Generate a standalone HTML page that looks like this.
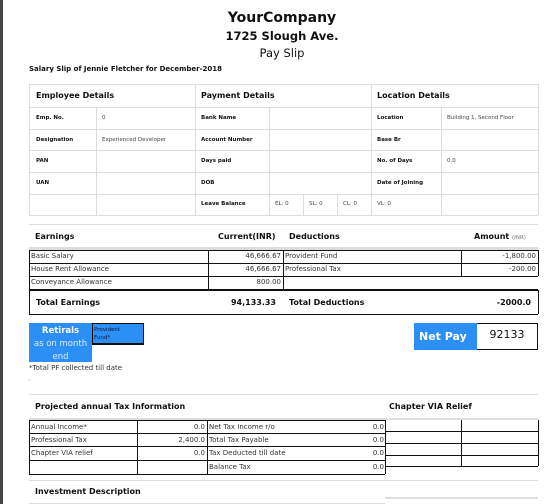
<!DOCTYPE html>
<html><head><meta charset="utf-8"><style>
*{margin:0;padding:0;box-sizing:border-box}
body{width:559px;height:504px;background:#fff;position:relative;overflow:hidden;font-family:"DejaVu Sans","Liberation Sans",sans-serif;color:#111}
.a{position:absolute;white-space:nowrap}
.h{position:absolute;background:#ddd;height:1px}
.v{position:absolute;background:#ddd;width:1px}
.bh{position:absolute;background:#111;height:1px}
.bv{position:absolute;background:#111;width:1px}
.l{font-size:5.5px;font-weight:bold}
.s{font-size:5.5px;color:#444}
.t{font-size:7px;color:#333}
.hd{font-size:8px;font-weight:bold}
</style></head><body>
<div style="position:absolute;left:0;top:0;width:3px;height:504px;background:#444"></div>
<div class="a" style="left:0;width:564px;text-align:center;top:10px;font-size:14px;font-weight:bold">YourCompany</div>
<div class="a" style="left:0;width:564px;text-align:center;top:29px;font-size:11.5px;font-weight:bold">1725 Slough Ave.</div>
<div class="a" style="left:0;width:564px;text-align:center;top:46px;font-size:11.5px">Pay Slip</div>
<div class="a" style="left:29px;top:65px;font-size:7px;font-weight:bold">Salary Slip of Jennie Fletcher for December-2018</div>

<div class="h" style="left:29px;width:509px;top:84px"></div>
<div class="h" style="left:29px;width:509px;top:107px"></div>
<div class="h" style="left:29px;width:509px;top:129px"></div>
<div class="h" style="left:29px;width:509px;top:150px"></div>
<div class="h" style="left:29px;width:509px;top:172px"></div>
<div class="h" style="left:29px;width:509px;top:194px"></div>
<div class="h" style="left:29px;width:509px;top:215px"></div>
<div class="v" style="left:29px;top:84px;height:131px"></div>
<div class="v" style="left:195px;top:84px;height:131px"></div>
<div class="v" style="left:371px;top:84px;height:131px"></div>
<div class="v" style="left:538px;top:84px;height:131px"></div>
<div class="v" style="left:96px;top:107px;height:108px"></div>
<div class="v" style="left:269px;top:107px;height:108px"></div>
<div class="v" style="left:441px;top:107px;height:108px"></div>
<div class="v" style="left:303px;top:194px;height:21px"></div>
<div class="v" style="left:337px;top:194px;height:21px"></div>
<div class="a hd" style="left:36px;top:91px">Employee Details</div>
<div class="a hd" style="left:201px;top:91px">Payment Details</div>
<div class="a hd" style="left:377px;top:91px">Location Details</div>
<div class="a l" style="left:36px;top:115px">Emp. No.</div><div class="a s" style="left:102px;top:115px">0</div>
<div class="a l" style="left:201px;top:115px">Bank Name</div>
<div class="a l" style="left:377px;top:115px">Location</div><div class="a s" style="left:447px;top:115px">Building 1, Second Floor</div>
<div class="a l" style="left:36px;top:137px">Designation</div><div class="a s" style="left:102px;top:137px">Experienced Developer</div>
<div class="a l" style="left:201px;top:137px">Account Number</div>
<div class="a l" style="left:377px;top:137px">Base Br</div>
<div class="a l" style="left:36px;top:158px">PAN</div>
<div class="a l" style="left:201px;top:158px">Days paid</div>
<div class="a l" style="left:377px;top:158px">No. of Days</div><div class="a s" style="left:447px;top:158px">0.0</div>
<div class="a l" style="left:36px;top:180px">UAN</div>
<div class="a l" style="left:201px;top:180px">DOB</div>
<div class="a l" style="left:377px;top:180px">Date of Joining</div>
<div class="a l" style="left:201px;top:201px">Leave Balance</div>
<div class="a s" style="left:275px;top:201px">EL: 0</div>
<div class="a s" style="left:309px;top:201px">SL: 0</div>
<div class="a s" style="left:343px;top:201px">CL: 0</div>
<div class="a s" style="left:377px;top:201px">VL: 0</div>

<div class="h" style="left:29px;width:509px;top:224px"></div>
<div class="a hd" style="left:35px;top:232px">Earnings</div>
<div class="a hd" style="left:218px;top:232px">Current(INR)</div>
<div class="a hd" style="left:289px;top:232px">Deductions</div>
<div class="a hd" style="left:474px;top:232px">Amount <span style="font-size:5.5px;color:#777;font-weight:normal">(INR)</span></div>
<div style="position:absolute;left:29px;width:509px;top:247px;height:3px;background:#ddd"></div>
<div class="bh" style="left:29px;width:509px;top:250px"></div>
<div class="bh" style="left:29px;width:509px;top:263px"></div>
<div class="bh" style="left:29px;width:509px;top:276px"></div>
<div class="bh" style="left:29px;width:509px;top:289px;height:2px"></div>
<div class="bh" style="left:29px;width:509px;top:314px"></div>
<div class="bv" style="left:29px;top:250px;height:64px"></div>
<div class="bv" style="left:538px;top:250px;height:26px"></div>
<div class="bv" style="left:538px;top:290px;height:24px"></div>
<div class="bv" style="left:208px;top:250px;height:40px"></div>
<div class="bv" style="left:283px;top:250px;height:40px"></div>
<div class="bv" style="left:461px;top:250px;height:26px"></div>
<div class="a t" style="left:31px;top:252px">Basic Salary</div>
<div class="a t" style="left:31px;top:265px">House Rent Allowance</div>
<div class="a t" style="left:31px;top:278px">Conveyance Allowance</div>
<div class="a t" style="left:208px;width:73px;text-align:right;top:252px">46,666.67</div>
<div class="a t" style="left:208px;width:73px;text-align:right;top:265px">46,666.67</div>
<div class="a t" style="left:208px;width:73px;text-align:right;top:278px">800.00</div>
<div class="a t" style="left:285px;top:252px">Provident Fund</div>
<div class="a t" style="left:285px;top:265px">Professional Tax</div>
<div class="a t" style="left:461px;width:75px;text-align:right;top:252px">-1,800.00</div>
<div class="a t" style="left:461px;width:75px;text-align:right;top:265px">-200.00</div>
<div class="a hd" style="left:36px;top:298px">Total Earnings</div>
<div class="a hd" style="left:208px;width:68px;text-align:right;top:298px">94,133.33</div>
<div class="a hd" style="left:289px;top:298px">Total Deductions</div>
<div class="a hd" style="left:461px;width:70px;text-align:right;top:298px">-2000.0</div>

<div style="position:absolute;left:29px;top:323px;width:63px;height:39px;background:#2b8ff5;color:#fff;text-align:center;font-size:8.5px;line-height:13px;padding-top:2px"><b>Retirals</b><br><span style="color:#dfeeff">as on month<br>end</span></div>
<div style="position:absolute;left:92px;top:323px;width:52px;height:22px;background:#2b8ff5;border:1px solid #111;border-bottom-width:2px;font-size:5.5px;color:#113;padding:2px 1px;line-height:8px">Provident<br>Fund*</div>
<div class="a" style="left:29px;top:364px;font-size:7px;color:#333">*Total PF collected till date</div>
<div style="position:absolute;left:414px;top:323px;width:63px;height:27px;background:#2b8ff5;color:#fff;font-weight:bold;font-size:11px;line-height:27px;padding-left:5px">Net Pay</div>
<div style="position:absolute;left:477px;top:323px;width:61px;height:27px;border:1px solid #111;border-left:none;font-size:11px;text-align:center;line-height:22px">92133</div>

<div class="a" style="left:28px;top:380px;font-size:6px;color:#666">`</div>
<div class="h" style="left:29px;width:509px;top:394px"></div>
<div class="a hd" style="left:35px;top:402px">Projected annual Tax Information</div>
<div class="a hd" style="left:389px;top:402px">Chapter VIA Relief</div>
<div class="h" style="left:29px;width:509px;top:418px;height:2px"></div>
<div class="bh" style="left:29px;width:356px;top:420px"></div>
<div class="bh" style="left:29px;width:356px;top:433px"></div>
<div class="bh" style="left:29px;width:356px;top:446px"></div>
<div class="bh" style="left:29px;width:356px;top:460px"></div>
<div class="bh" style="left:29px;width:356px;top:474px"></div>
<div class="bv" style="left:29px;top:420px;height:54px"></div>
<div class="bv" style="left:137px;top:420px;height:54px"></div>
<div class="bv" style="left:207px;top:420px;height:54px"></div>
<div class="bv" style="left:385px;top:420px;height:54px"></div>
<div class="bh" style="left:385px;width:153px;top:431px"></div>
<div class="bh" style="left:385px;width:153px;top:443px"></div>
<div class="bh" style="left:385px;width:153px;top:455px"></div>
<div class="bh" style="left:385px;width:153px;top:466px"></div>
<div class="bv" style="left:461px;top:420px;height:46px"></div>
<div class="bv" style="left:538px;top:420px;height:46px"></div>
<div class="a t" style="left:31px;top:423px">Annual Income*</div>
<div class="a t" style="left:31px;top:436px">Professional Tax</div>
<div class="a t" style="left:31px;top:449px">Chapter VIA relief</div>
<div class="a t" style="left:137px;width:68px;text-align:right;top:423px">0.0</div>
<div class="a t" style="left:137px;width:68px;text-align:right;top:436px">2,400.0</div>
<div class="a t" style="left:137px;width:68px;text-align:right;top:449px">0.0</div>
<div class="a t" style="left:209px;top:423px">Net Tax Income r/o</div>
<div class="a t" style="left:209px;top:436px">Total Tax Payable</div>
<div class="a t" style="left:209px;top:449px">Tax Deducted till date</div>
<div class="a t" style="left:209px;top:463px">Balance Tax</div>
<div class="a t" style="left:207px;width:177px;text-align:right;top:423px">0.0</div>
<div class="a t" style="left:207px;width:177px;text-align:right;top:436px">0.0</div>
<div class="a t" style="left:207px;width:177px;text-align:right;top:449px">0.0</div>
<div class="a t" style="left:207px;width:177px;text-align:right;top:463px">0.0</div>
<div class="h" style="left:29px;width:509px;top:480px"></div>
<div class="a hd" style="left:35px;top:487px">Investment Description</div>
<div class="h" style="left:385px;width:153px;top:497px;height:2px"></div>
<div class="h" style="left:29px;width:356px;top:503px"></div>
</body></html>
